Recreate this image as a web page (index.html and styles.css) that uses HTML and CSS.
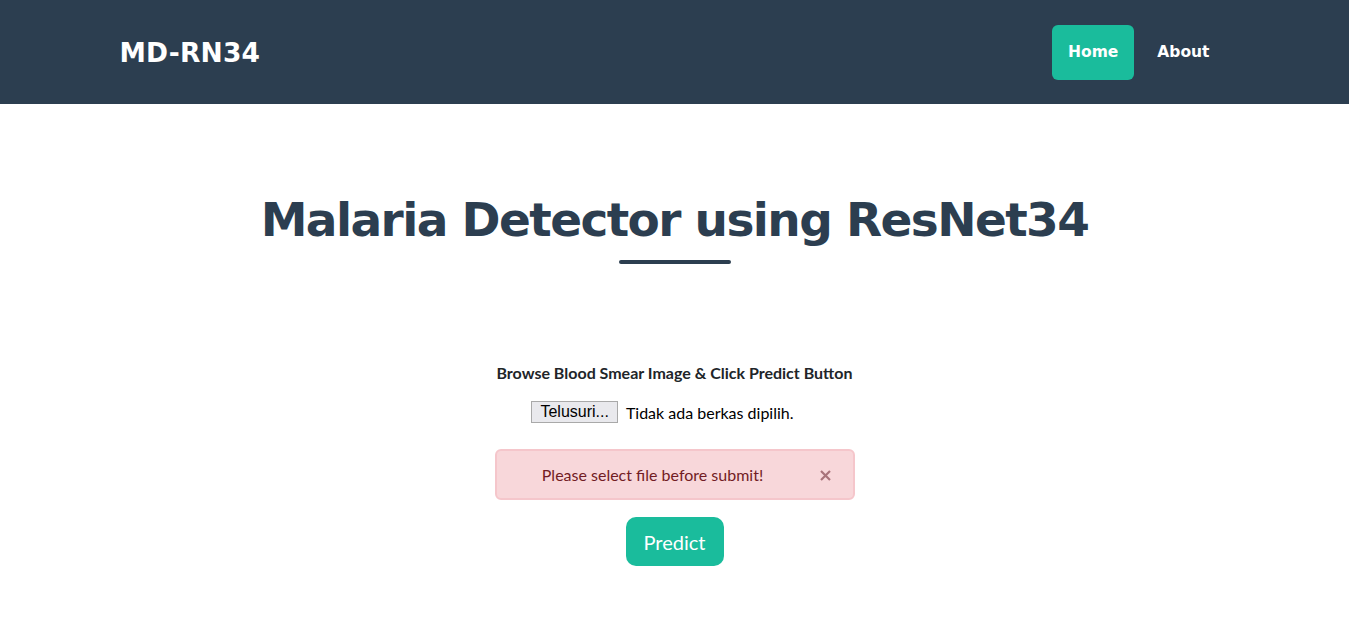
FILE: index.html
```html
<!DOCTYPE html>
<html lang="id">
<head>
<meta charset="utf-8">
<title>MD-RN34</title>
<link rel="stylesheet" href="styles.css">
</head>
<body>
<nav class="navbar">
  <div class="container nav-inner">
    <a class="brand" href="#">MD-RN34</a>
    <ul class="nav-links">
      <li><a class="nav-link active" href="#">Home</a></li>
      <li><a class="nav-link" href="#">About</a></li>
    </ul>
  </div>
</nav>
<section class="masthead">
  <h1 class="title">Malaria Detector using ResNet34</h1>
  <div class="divider"></div>
</section>
<section class="upload">
  <p class="label">Browse Blood Smear Image &amp; Click Predict Button</p>
  <div class="file-row">
    <button class="file-btn" type="button">Telusuri...</button>
    <span class="file-name">Tidak ada berkas dipilih.</span>
  </div>
  <div class="alert">
    <span>Please select file before submit!</span>
    <svg class="close" width="11" height="11" viewBox="0 0 11 11" aria-label="Close"><path d="M1 1L10 10M10 1L1 10" stroke="#a8737a" stroke-width="2.2" stroke-linecap="butt"/></svg>
  </div>
  <button class="predict" type="button">Predict</button>
</section>
</body>
</html>
```
FILE: styles.css
```css
* { box-sizing: border-box; }
body {
  margin: 0;
  font-family: Lato, "Liberation Sans", sans-serif;
  color: #212529;
  background: #fff;
}
.container {
  width: 1140px;
  margin: 0 auto;
  padding: 0 15px;
}
.navbar {
  background: #2c3e50;
  height: 104px;
}
.nav-inner {
  display: flex;
  align-items: center;
  justify-content: space-between;
  height: 104px;
}
.brand {
  font-family: "DejaVu Sans", sans-serif;
  font-weight: 700;
  font-size: 26.5px;
  color: #fff;
  text-decoration: none;
  letter-spacing: 0.2px;
}
.nav-links {
  list-style: none;
  display: flex;
  gap: 7px;
  margin: 0;
  padding: 0;
}
.nav-link {
  display: flex;
  align-items: center;
  height: 55px;
  padding: 0 16px;
  border-radius: 6px;
  font-family: "DejaVu Sans", sans-serif;
  font-weight: 700;
  font-size: 15.5px;
  color: #fff;
  text-decoration: none;
}
.nav-links li:last-child .nav-link { padding-right: 20px; }
.nav-link.active { background: #1abc9c; }
.masthead {
  text-align: center;
  padding-top: 86px;
}
.title {
  margin: 0;
  font-family: "DejaVu Sans", sans-serif;
  font-weight: 700;
  font-size: 47px;
  letter-spacing: -1.6px;
  line-height: 60px;
  color: #2c3e50;
}
.divider {
  width: 112px;
  height: 4px;
  border-radius: 2px;
  background: #2c3e50;
  margin: 10px auto 0;
}
.upload {
  text-align: center;
  padding-top: 99px;
}
.label {
  margin: 0 0 19px;
  font-weight: 700;
  font-size: 16px;
}
.file-row {
  display: flex;
  justify-content: center;
  align-items: center;
  gap: 8px;
  margin-bottom: 26px;
  padding-right: 24px;
}
.file-btn {
  font-family: "Liberation Sans", sans-serif;
  font-size: 16px;
  padding: 1px 8px;
  height: 22px;
  background: #e9e9ed;
  border: 1px solid #a9a9a9;
  border-radius: 0;
  color: #000;
}
.file-name { font-size: 16px; color: #000; }
.alert {
  position: relative;
  width: 360px;
  height: 51px;
  margin: 0 auto 17px;
  background: #f8d7da;
  border: 2px solid #f5c6cb;
  border-radius: 6px;
  color: #721c24;
  font-size: 16px;
  display: flex;
  align-items: center;
  justify-content: center;
  padding-right: 44px;
}
.close {
  position: absolute;
  right: 22px;
  top: 19px;
}
.predict {
  width: 98px;
  height: 49px;
  border: 0;
  border-radius: 10px;
  background: #1abc9c;
  color: #fff;
  font-family: Lato, sans-serif;
  font-size: 20px;
}
```
